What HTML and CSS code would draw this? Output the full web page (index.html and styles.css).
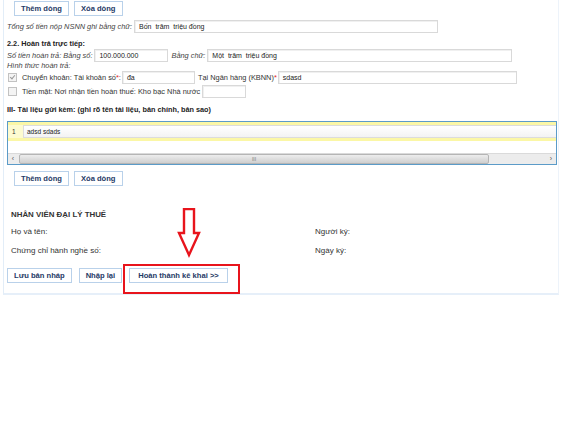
FILE: index.html
```html
<!DOCTYPE html>
<html lang="vi">
<head>
  <meta charset="UTF-8" />
  <title>Hoàn thuế - Kê khai</title>
  <link rel="stylesheet" href="styles.css">
</head>
<body>
  <div class="page">
    <div class="btn-row top">
      <button class="btn">Thêm dòng</button>
      <button class="btn">Xóa dòng</button>
    </div>

    <div class="line first">
      <span class="lbl">Tổng số tiền nộp NSNN ghi bằng chữ:</span>
      <span class="field w-total">Bốn&nbsp; trăm&nbsp; triệu đồng</span>
    </div>

    <!-- 2.2 hoan tra truc tiep -->
    <div class="heading">2.2. Hoàn trả trực tiếp:</div>
    <div class="line">
      <span class="lbl">Số tiền hoàn trả: Bằng số:</span>
      <span class="field w-num">100.000.000</span>
      <span class="lbl gap">Bằng chữ:</span>
      <span class="field w-words">Một&nbsp; trăm&nbsp; triệu đồng</span>
    </div>
    <div class="lbl sub">Hình thức hoàn trả:</div>
    <div class="line check">
      <span class="box checked"></span>
      <span class="txt">Chuyển khoản: Tài khoản số<b class="req">*</b>:</span>
      <span class="field w-acc">đa</span>
      <span class="txt gap2">Tại Ngân hàng (KBNN)<b class="req">*</b></span>
      <span class="field w-bank">sdasd</span>
    </div>
    <div class="line check">
      <span class="box"></span>
      <span class="txt">Tiền mặt: Nơi nhận tiền hoàn thuế: Kho bạc Nhà nước</span>
      <span class="field w-kb"></span>
    </div>

    <!-- III tai lieu gui kem -->
    <div class="heading sec3">III- Tài liệu gửi kèm: (ghi rõ tên tài liệu, bản chính, bản sao)</div>
    <div class="grid">
      <div class="band"></div>
      <div class="grid-row">
        <span class="idx">1</span>
        <span class="cell">adsd sdads</span>
      </div>
      <div class="band"></div>
      <div class="empty"></div>
      <div class="hscroll">
        <span class="arrow">‹</span>
        <span class="thumb"><span class="grip">III</span></span>
        <span class="track"></span>
        <span class="arrow">›</span>
      </div>
    </div>
    <div class="btn-row">
      <button class="btn">Thêm dòng</button>
      <button class="btn">Xóa dòng</button>
    </div>

    <!-- nhan vien dai ly thue -->
    <div class="agent">
      <div class="agent-title">NHÂN VIÊN ĐẠI LÝ THUẾ</div>
      <div class="agent-grid">
        <span>Họ và tên:</span>
        <span>Người ký:</span>
        <span>Chứng chỉ hành nghề số:</span>
        <span>Ngày ký:</span>
      </div>
    </div>

    <div class="actions">
      <button class="btn">Lưu bản nháp</button>
      <button class="btn">Nhập lại</button>
      <button class="btn wide">Hoàn thành kê khai &gt;&gt;</button>
      <span class="mark-box"></span>
      <svg class="mark-arrow" width="26" height="50" viewBox="0 0 26 50">
        <path d="M8 1 H18 V25 H23 L13 47 L3 25 H8 Z" fill="#fff" stroke="#e8141c" stroke-width="2.4" stroke-linejoin="miter"/>
      </svg>
    </div>
  </div>
</body>
</html>
```

FILE: styles.css
```css
body {
  margin: 0;
  background: #fff;
  font-family: Arial, "Liberation Sans", sans-serif;
  font-size: 7.4px;
  color: #333;
}
.page {
  position: relative;
  width: 554px;
  margin-left: 3px;
  padding: 1px 0 10px;
  border-left: 1px solid #e2edf8;
  border-right: 1px solid #edf3fa;
  border-bottom: 2px solid #e6eff9;
}
.btn {
  height: 15px;
  padding: 0 6px;
  background: #fff;
  border: 1px solid #b9d1ea;
  font-family: Arial, "Liberation Sans", sans-serif;
  font-size: 7.6px;
  font-weight: bold;
  color: #1f3a66;
  line-height: 13px;
}
.btn-row {
  display: flex;
  gap: 5px;
  padding-left: 10px;
}
.line {
  display: flex;
  align-items: center;
  height: 14px;
  padding-left: 3px;
}
.line.first {
  margin-top: 3px;
}
.lbl {
  font-style: italic;
  color: #444;
  white-space: nowrap;
}
.sub {
  display: block;
  padding-left: 3px;
  height: 8px;
  line-height: 8px;
}
.field {
  box-sizing: border-box;
  height: 13px;
  margin-left: 2px;
  padding: 0 4px;
  border: 1px solid #d9d9d9;
  box-shadow: inset 1px 1px 0 #f0f0f0;
  font-size: 7px;
  line-height: 11px;
  color: #222;
  white-space: nowrap;
}
.w-total { width: 304px; }
.w-num { width: 74px; }
.w-words { width: 305px; }
.w-acc { width: 73px; margin-left: 1px; }
.w-bank { width: 239px; margin-left: 1px; }
.w-kb { width: 44px; }
.gap { margin-left: 3px; }
.gap2 { margin-left: 3px; }
.heading {
  margin-top: 6px;
  padding-left: 3px;
  height: 9px;
  line-height: 9px;
  font-weight: bold;
  font-size: 7.3px;
  color: #222;
}
.heading.sec3 {
  margin-top: 7px;
}
.check {
  height: 13px;
  padding-left: 4px;
  margin-top: 1px;
}
.box {
  width: 7px;
  height: 7px;
  margin-right: 5px;
  border: 1px solid #c2c2c2;
  background: #f4f4f4;
  position: relative;
}
.box.checked::after {
  content: "";
  position: absolute;
  left: 2px;
  top: 0;
  width: 2px;
  height: 4px;
  border: solid #9a9a9a;
  border-width: 0 1px 1px 0;
  transform: rotate(40deg);
}
.txt {
  white-space: nowrap;
  color: #333;
}
.req {
  color: #e01b1b;
  font-weight: normal;
}
.grid {
  margin: 7px 0 6px 3px;
  width: 548px;
  border: 1px solid #5b9bc8;
  display: flex;
  flex-direction: column;
}
.band {
  height: 3px;
  background: #fbf7a6;
}
.grid-row {
  display: flex;
  height: 13px;
  background: #fdfbd0;
}
.idx {
  width: 15px;
  padding-left: 4px;
  box-sizing: border-box;
  font-size: 6.5px;
  line-height: 13px;
}
.cell {
  flex: 1;
  background: linear-gradient(#fff, #f3f3f3);
  border: 1px solid #dcdcdc;
  border-right: 0;
  padding-left: 3px;
  font-size: 6.5px;
  line-height: 11px;
  color: #222;
}
.empty {
  height: 12px;
}
.hscroll {
  display: flex;
  height: 10px;
  background: #ececec;
  border-top: 1px solid #dadada;
}
.arrow {
  width: 10px;
  font-size: 7px;
  line-height: 10px;
  text-align: center;
  color: #555;
}
.thumb {
  width: 468px;
  margin: 0 1px;
  border: 1px solid #b5b5b5;
  border-radius: 2px;
  background: linear-gradient(#ededed, #cfcfcf);
  text-align: center;
  font-size: 5px;
  line-height: 8px;
  color: #777;
}
.track {
  flex: 1;
}
.agent {
  padding: 23px 0 0 7px;
}
.agent-title {
  font-size: 7.9px;
  font-weight: bold;
  color: #333;
  height: 12px;
  line-height: 12px;
}
.agent-grid {
  display: grid;
  grid-template-columns: 304px 1fr;
  row-gap: 10px;
  padding-top: 6px;
  font-size: 8px;
  line-height: 9px;
}
.actions {
  position: relative;
  display: flex;
  gap: 7px;
  margin-top: 13px;
  padding-left: 3px;
}
.actions .btn {
  padding: 0 6px;
}
.actions .btn.wide {
  padding: 0 8px;
}
.mark-box {
  position: absolute;
  left: 119px;
  top: -4px;
  width: 113px;
  height: 26px;
  border: 2px solid #e8141c;
}
.mark-arrow {
  position: absolute;
  left: 172px;
  top: -60px;
}
```
